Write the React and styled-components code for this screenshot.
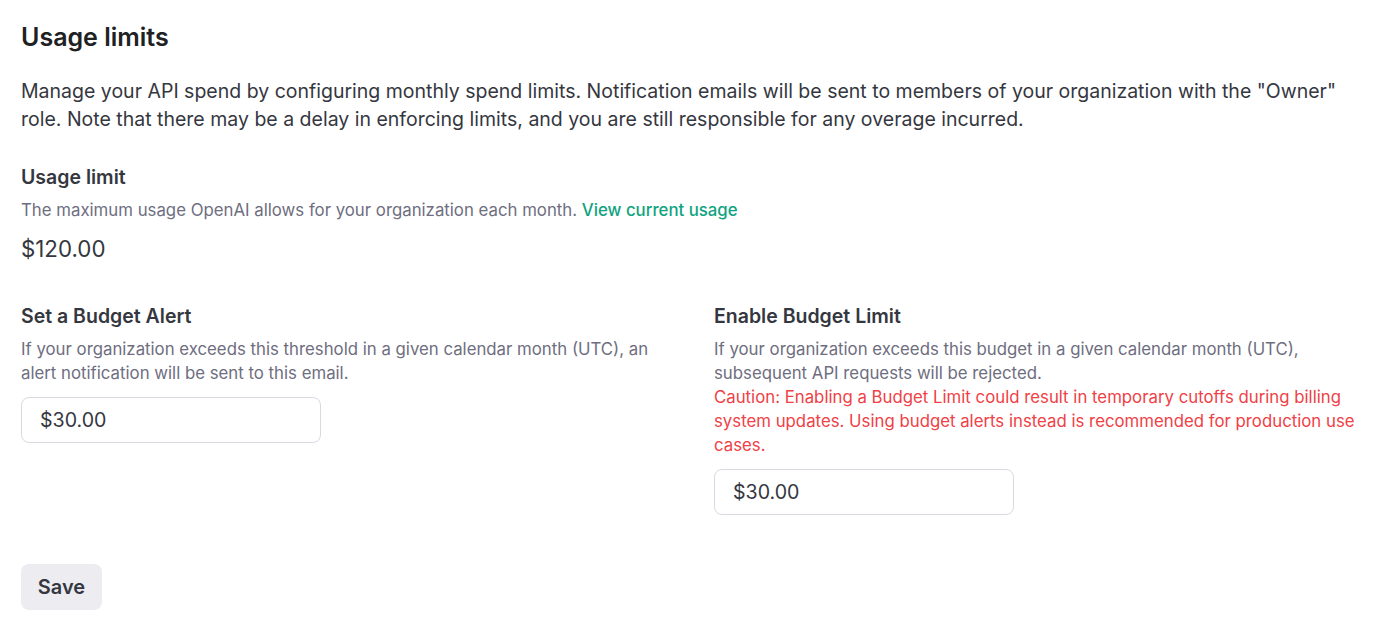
import React from 'react';
import styled, { createGlobalStyle } from 'styled-components';

const Global = createGlobalStyle`
    body {
        margin: 0;
        background: #fff;
        font-family: Inter, "Noto Sans", sans-serif;
        color: #353740;
    }
`

const Page = styled.div`
    padding: 21px 12px 21px 21px;
`
const Title = styled.h1`
    margin: 0;
    font-size: 25px;
    line-height: 32px;
    font-weight: 600;
    color: #202123;
`
const Intro = styled.p`
    margin: 25px 0 0;
    font-size: 19.5px;
    line-height: 27.5px;
    color: #353740;
    max-width: 1330px;
`
const Section = styled.div`
    display: flex;
    flex-direction: column;
    align-items: flex-start;
    margin-top: ${p => p.$top || 0}px;
`
const Heading = styled.h2`
    margin: 0;
    font-size: 19.5px;
    line-height: 24px;
    font-weight: 600;
    color: #353740;
`
const Hint = styled.p`
    margin: 9px 0 0;
    font-size: 16.8px;
    line-height: 24px;
    color: #6e6e80;
`
const Caution = styled.span`
    display: block;
    color: #ef4146;
`
const Link = styled.a`
    color: #10a37f;
    font-weight: 500;
    text-decoration: none;
`
const Amount = styled.div`
    margin-top: 13px;
    font-size: 22.3px;
    line-height: 28px;
    color: #353740;
`
const Columns = styled.div`
    display: grid;
    grid-template-columns: 1fr 1fr;
    column-gap: 42px;
    margin-top: 41px;
`
const Input = styled.input`
    margin-top: 12px;
    box-sizing: border-box;
    width: 300px;
    height: 46px;
    padding: 0 18px;
    border: 1px solid #d9d9e3;
    border-radius: 8px;
    font-family: inherit;
    font-size: 19.6px;
    color: #353740;
    outline: none;
`
const Button = styled.button`
    margin-top: 49px;
    width: 81px;
    height: 46px;
    border: none;
    border-radius: 8px;
    background: #ececf1;
    color: #353740;
    font-family: inherit;
    font-size: 20px;
    font-weight: 600;
    cursor: pointer;
`

export default function App() {
    return (
        <Page>
            <Global />
            <Title>Usage limits</Title>
            <Intro>
                Manage your API spend by configuring monthly spend limits. Notification emails will be sent to members of your organization with the "Owner" role. Note that there may be a delay in enforcing limits, and you are still responsible for any overage incurred.
            </Intro>
            <Section $top={32}>
                <Heading>Usage limit</Heading>
                <Hint>
                    The maximum usage OpenAI allows for your organization each month. <Link href="#">View current usage</Link>
                </Hint>
                <Amount>$120.00</Amount>
            </Section>
            <Columns>
                <Section>
                    <Heading>Set a Budget Alert</Heading>
                    <Hint>If your organization exceeds this threshold in a given calendar month (UTC), an alert notification will be sent to this email.</Hint>
                    <Input defaultValue="$30.00" />
                </Section>
                <Section>
                    <Heading>Enable Budget Limit</Heading>
                    <Hint>
                        If your organization exceeds this budget in a given calendar month (UTC), subsequent API requests will be rejected.
                        <Caution>Caution: Enabling a Budget Limit could result in temporary cutoffs during billing system updates. Using budget alerts instead is recommended for production use cases.</Caution>
                    </Hint>
                    <Input defaultValue="$30.00" />
                </Section>
            </Columns>
            <Button>Save</Button>
        </Page>
    )
}
